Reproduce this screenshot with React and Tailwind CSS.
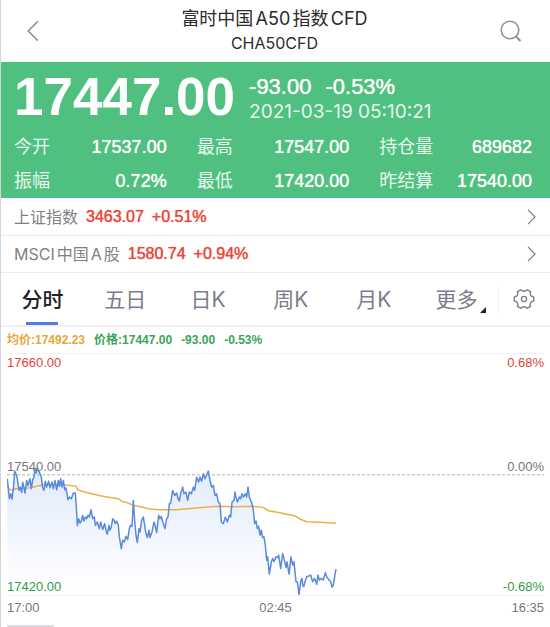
import React from 'react'

const STATS = [
  { label: '今开', value: '17537.00' },
  { label: '最高', value: '17547.00' },
  { label: '持仓量', value: '689682' },
  { label: '振幅', value: '0.72%' },
  { label: '最低', value: '17420.00' },
  { label: '昨结算', value: '17540.00' },
]

const INDICES = [
  { name: '上证指数', price: '3463.07', change: '+0.51%' },
  { name: 'MSCI中国A股', price: '1580.74', change: '+0.94%' },
]

const TABS = ['分时', '五日', '日K', '周K', '月K']

// Each chunk is [x offset, [x, y, x, y, ...]]; y = 73 is the previous settlement
const PRICE = [
  [-21, [
    22, 85, 25, 115, 28, 145, 32, 130, 36, 146, 40, 115, 44, 62, 48, 70, 52, 85, 57, 120, 61, 110, 65, 126,
    68, 95, 72, 112, 75, 128, 80, 90, 84, 105, 90, 85, 94, 115, 98, 88, 102, 80, 105, 55, 108, 68, 112, 52,
    116, 62, 120, 70, 124, 80, 128, 112, 132, 120, 136, 92, 140, 110, 146, 92, 150, 112, 156, 95, 160, 115,
    165, 90, 170, 118, 175, 90, 178, 108, 182, 85, 186, 110, 190, 90, 194, 118, 198, 112, 204, 148, 208, 140,
    214, 145, 220, 128, 226, 128, 229, 170, 232, 226, 236, 205, 240, 218, 244, 212, 248, 195, 252, 212,
    256, 200, 260, 205, 264, 195, 268, 200, 273, 178, 278, 205, 283, 200, 286, 225, 292, 215, 298, 235,
    302, 215, 308, 238, 314, 220, 318, 240, 322, 252, 327, 225,
  ]],
  [309, [
    0, 240, 4, 230, 8, 205, 12, 210, 16, 220, 20, 212, 25, 225, 28, 260, 34, 296, 38, 270, 43, 275, 48, 258,
    53, 268, 58, 235, 62, 225, 66, 228, 70, 150, 74, 210, 78, 255, 82, 277, 87, 235, 90, 245, 95, 210,
    100, 200, 104, 225, 107, 245, 112, 262, 117, 240, 120, 262, 126, 245, 132, 215, 136, 228, 140, 247,
    146, 195, 150, 205, 154, 198, 158, 215, 165, 235, 170, 205, 174, 200, 178, 160, 182, 158, 188, 120,
    194, 135, 200, 128, 204, 145, 208, 152, 212, 130, 218, 110, 222, 130, 228, 125, 233, 150, 238, 125,
    244, 130, 250, 110, 254, 120, 260, 80, 266, 95, 270, 80, 275, 92, 280, 70, 285, 85, 290, 72, 295, 62,
    300, 90, 305, 110, 310, 105, 315, 135, 320, 130, 325, 155, 330, 160, 334, 215,
  ]],
  [639, [
    10, 220, 16, 200, 22, 215, 28, 195, 32, 200, 36, 155, 42, 150, 45, 125, 48, 140, 52, 155, 58, 140,
    62, 145, 66, 130, 70, 140, 76, 130, 80, 140, 84, 110, 88, 140, 92, 150, 96, 160, 100, 180, 104, 220,
    108, 212, 112, 235, 116, 228, 120, 255, 124, 240, 128, 262, 132, 260, 136, 285, 140, 330, 143, 320,
    148, 372, 154, 335, 158, 325, 162, 335, 168, 320, 173, 322, 176, 315, 182, 355, 188, 310, 193, 330,
    198, 352, 201, 335, 207, 372, 213, 320, 218, 345, 222, 335, 228, 395, 232, 395, 237, 434, 242, 395,
    246, 385, 248, 405, 251, 410, 255, 395, 260, 380, 266, 378, 272, 375, 278, 395, 284, 385, 290, 403,
    294, 375, 298, 390, 304, 385, 310, 390, 316, 368, 320, 380, 326, 388, 332, 395, 336, 411, 340, 405,
    344, 380, 348, 357,
  ]],
]

const AVERAGE = [
  [-21, [
    22, 108, 30, 117, 38, 120, 45, 115, 90, 112, 130, 103, 190, 103, 228, 107, 234, 119, 260, 126, 300, 136,
  ]],
  [309, [
    0, 141, 25, 145, 40, 155, 50, 156, 65, 163, 90, 169, 120, 176, 150, 178, 200, 178, 250, 174, 300, 169,
  ]],
  [639, [
    0, 168, 40, 169, 100, 168, 130, 171, 145, 181, 180, 187, 225, 197, 240, 206, 260, 214, 300, 216, 348, 219,
  ]],
]

function toPath(chunks) {
  const pts = []
  chunks.forEach(([dx, v]) => {
    for (let i = 0; i < v.length; i += 2) pts.push(`${v[i] + dx} ${v[i + 1]}`)
  })
  return 'M' + pts.join('L')
}

function Chevron({ className }) {
  return (
    <svg viewBox="0 0 10 18" fill="none" stroke="currentColor" strokeWidth="1.3" className={className}>
      <path d="M1 1l8 8-8 8" />
    </svg>
  )
}

function Chart() {
  const price = toPath(PRICE)
  return (
    <div className="relative mx-[6px] h-[243px] border-y border-[#f1f1f3] text-[13px] leading-4">
      <svg viewBox="0 -291 1611 726" preserveAspectRatio="none" fill="none" className="block h-full w-full">
        <defs>
          <linearGradient id="fill" gradientUnits="userSpaceOnUse" x1="0" y1="60" x2="0" y2="420">
            <stop offset="0" stopColor="#e2ebfb" />
            <stop offset="1" stopColor="#ffffff" />
          </linearGradient>
        </defs>
        <path d={`${price}L987 435L1 435Z`} fill="url(#fill)" />
        <path d="M0 73H1611" stroke="#b0b0b0" strokeDasharray="3 2" vectorEffect="non-scaling-stroke" />
        <path d={toPath(AVERAGE)} stroke="#e8b04c" strokeWidth="1.5" vectorEffect="non-scaling-stroke" />
        <path d={price} stroke="#5a8ade" strokeWidth="1.5" strokeLinejoin="round" vectorEffect="non-scaling-stroke" />
      </svg>
      <span className="absolute left-0 top-px text-[#e0453d]">17660.00</span>
      <span className="absolute right-0 top-px text-[#e0453d]">0.68%</span>
      <span className="absolute bottom-1/2 left-0 text-[#77777c]">17540.00</span>
      <span className="absolute bottom-1/2 right-0 text-[#77777c]">0.00%</span>
      <span className="absolute bottom-0 left-0 text-[#2e9d48]">17420.00</span>
      <span className="absolute bottom-0 right-0 text-[#2e9d48]">-0.68%</span>
    </div>
  )
}

export default function App() {
  return (
    <div className="w-full overflow-hidden border-l border-[#d4d4d6] bg-white font-['Liberation_Sans','Noto_Sans_CJK_SC',sans-serif] [text-autospace:normal]">
      <header className="grid h-[62px] grid-cols-[1fr_auto_1fr] items-center pl-[26px] pr-7 text-[#8f8fa3]">
        <button aria-label="返回" className="justify-self-start">
          <Chevron className="h-[22px] w-3 rotate-180" />
        </button>
        <div className="pb-px text-center font-[Inter,'Noto_Sans_CJK_SC',sans-serif] text-[#2b2b2e]">
          <h1 className="text-[18px] leading-[25px]">富时中国A50指数CFD</h1>
          <p className="text-[16px] leading-6">CHA50CFD</p>
        </div>
        <button aria-label="搜索" className="justify-self-end">
          <svg viewBox="0 0 22 22" fill="none" stroke="currentColor" strokeWidth="1.6" className="size-[22px]">
            <circle cx="10" cy="10" r="8.8" />
            <path d="M15.5 16l5 5" strokeWidth="2" />
          </svg>
        </button>
      </header>

      <section className="bg-[#4fc07f] pl-[13px] pr-[18px] text-white">
        <div className="flex h-[68px] items-center gap-[14px] pt-[2px]">
          <strong className="text-[53px] leading-[66px]">17447.00</strong>
          <div className="pt-1">
            <div className="flex gap-[14px] text-[22px] leading-[25px] [text-shadow:0_0_1px_currentColor]">
              <span>-93.00</span>
              <span>-0.53%</span>
            </div>
            <div className="font-[Inter] text-[19px] leading-[25px] text-[#e6f7ed]">2021-03-19 05:10:21</div>
          </div>
        </div>
        <dl className="grid grid-cols-3 gap-x-[30px] text-[18px] leading-[34px]">
          {STATS.map(s => (
            <div key={s.label} className="flex justify-between">
              <dt className="text-[#e6f7ed]">{s.label}</dt>
              <dd className="[text-shadow:0_0_1px_currentColor]">{s.value}</dd>
            </div>
          ))}
        </dl>
      </section>

      <div className="pt-px">
        {INDICES.map(item => (
          <a key={item.name} href="#" className="flex h-[37px] items-center border-b border-[#ececef] pl-[13px] pr-[14px] text-[16px]">
            <span className="mr-2 font-[Inter,'Noto_Sans_CJK_SC',sans-serif] text-[#808086]">{item.name}</span>
            <span className="mr-2 text-[#e8473c] [text-shadow:0_0_1px_currentColor]">{item.price}</span>
            <span className="text-[#e8473c] [text-shadow:0_0_1px_currentColor]">{item.change}</span>
            <Chevron className="ml-auto h-4 w-[9px] text-[#77777c]" />
          </a>
        ))}
      </div>

      <nav className="flex h-[54px] items-stretch border-b-2 border-[#f1f1f3] font-[Inter,'Noto_Sans_CJK_SC',sans-serif] text-[21px] text-[#7c7c8e] [text-autospace:no-autospace]">
        {TABS.map((tab, i) => (
          <button key={tab} className={`relative flex-1 pt-[2px] ${i === 0 ? 'font-medium text-[#222225]' : ''}`}>
            {tab}
            {i === 0 && <span className="absolute bottom-0 left-1/2 h-[3px] w-8 -translate-x-1/2 bg-[#4e7fe6]" />}
          </button>
        ))}
        <button className="relative flex-1 pt-[2px]">
          更多
          <svg viewBox="0 0 6 6" className="absolute bottom-3 right-3 size-[6px] text-[#222225]">
            <path d="M6 0V6H0Z" fill="currentColor" />
          </svg>
        </button>
        <span className="my-3 w-px bg-[#f1f1f3]" />
        <button aria-label="设置" className="flex w-[51px] items-center justify-center">
          <svg viewBox="0 0 24 24" fill="none" stroke="currentColor" strokeWidth="1.5" className="size-[22px]">
            <path d="M12 3.6Q14.2 3.6 15.4 1.8L19.2 4Q18.2 6 19.2 7.8Q20.3 9.6 22.6 9.8V14.2Q20.3 14.4 19.2 16.2Q18.2 18 19.2 20L15.4 22.2Q14.2 20.4 12 20.4Q9.8 20.4 8.6 22.2L4.8 20Q5.8 18 4.8 16.2Q3.7 14.4 1.4 14.2V9.8Q3.7 9.6 4.8 7.8Q5.8 6 4.8 4L8.6 1.8Q9.8 3.6 12 3.6Z" strokeLinejoin="round" />
            <circle cx="12" cy="12" r="2.8" />
          </svg>
        </button>
      </nav>

      <div className="flex h-[26px] items-center gap-[9px] px-[6px] text-[12px] font-bold text-[#3aa655]">
        <span className="text-[#e6a63c]">均价:17492.23</span>
        <span>价格:17447.00</span>
        <span>-93.00</span>
        <span>-0.53%</span>
      </div>

      <Chart />

      <div className="flex justify-between px-[6px] text-[13px] leading-6 text-[#77777c]">
        <span>17:00</span>
        <span>02:45</span>
        <span>16:35</span>
      </div>
      <div className="ml-[6px] mt-[5px] h-[2px] w-[47px] bg-[#dcdce0]" />
    </div>
  )
}
